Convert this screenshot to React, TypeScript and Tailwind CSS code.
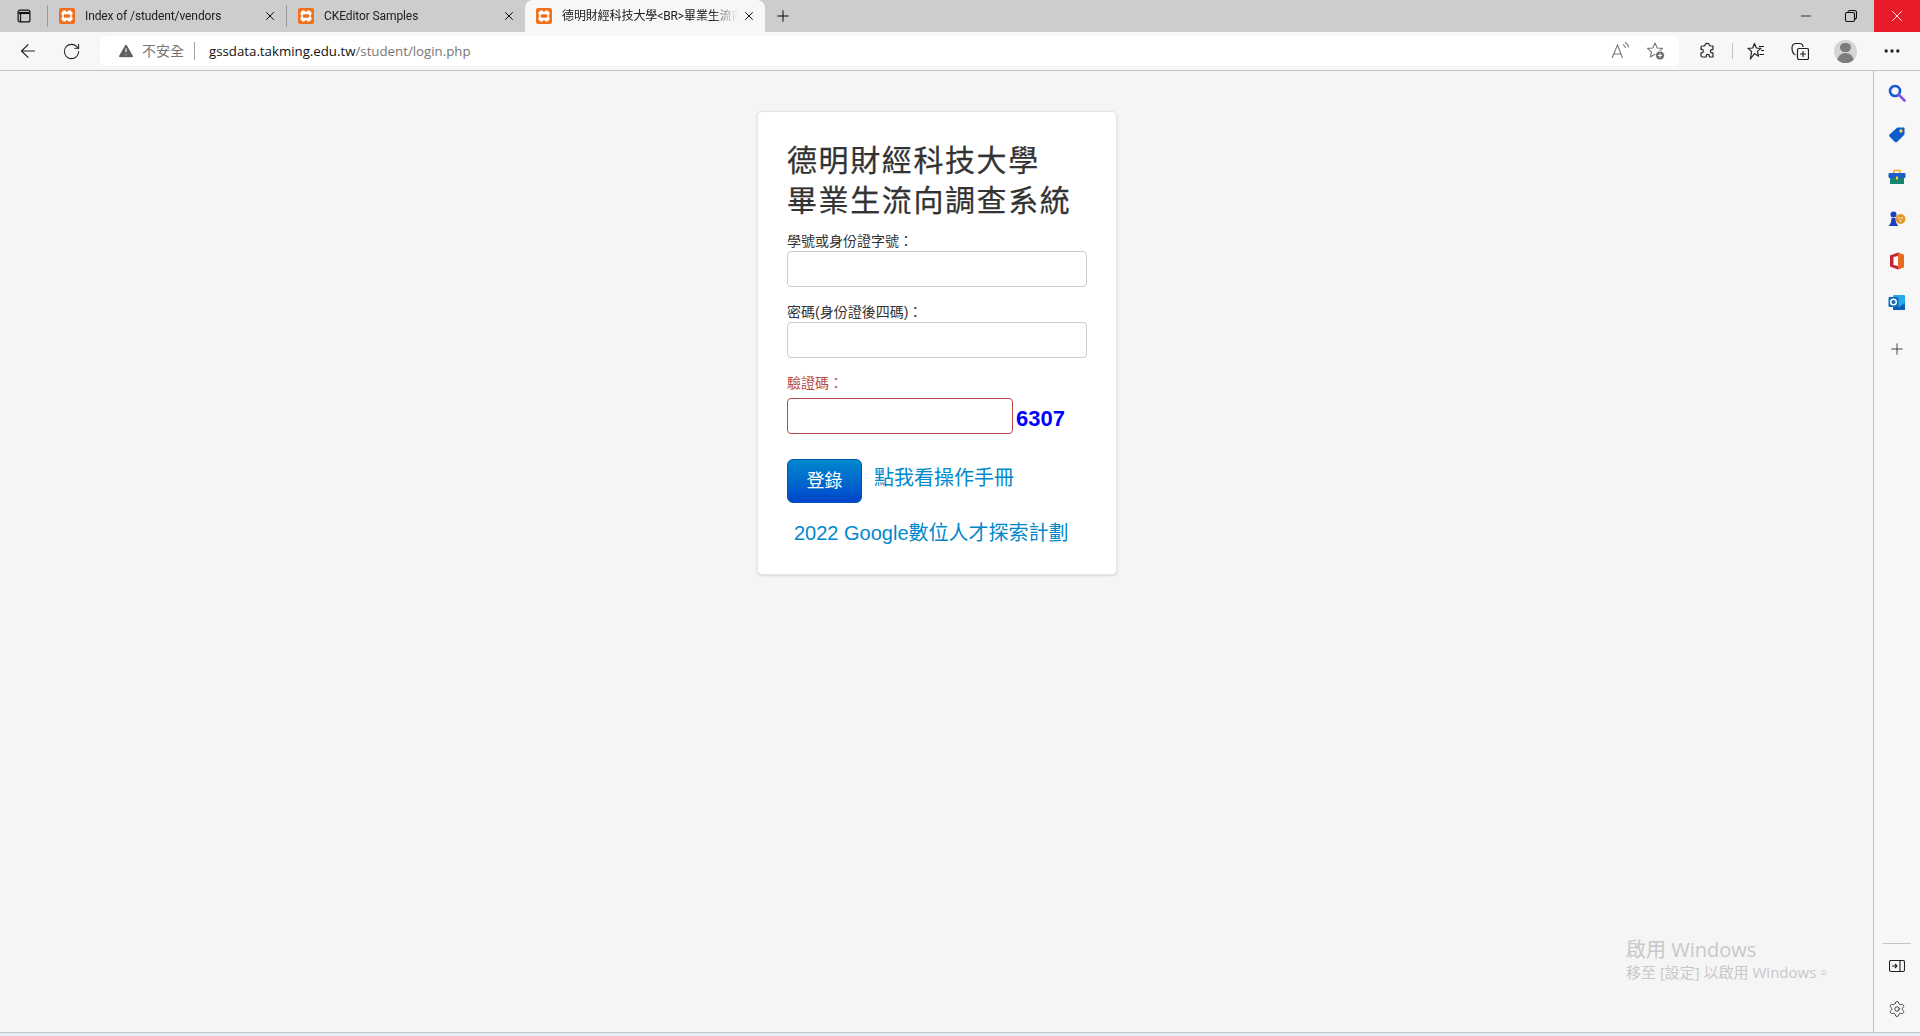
import { ArrowLeft, RotateCw, Minus, Plus, X, Ellipsis, Settings, TriangleAlert } from 'lucide-react';

function XamppIcon() {
    return (
        <svg className="w-4 h-4 shrink-0" viewBox="0 0 16 16">
            <rect width="16" height="16" rx="2" fill="#f0701e" />
            <path d="M4.500 2.500h2L8 4.300l1.500-1.800h2l2 2v2L12.300 8l1.200 1.500v2l-2 2h-2L8 11.700l-1.500 1.800h-2l-2-2v-2L3.700 8 2.500 6.500v-2z" fill="#fff" />
            <rect x="4.800" y="6.300" width="6.400" height="3.400" rx="1" fill="#f0701e" />
        </svg>
    );
}

function Tab({ title, active, className }: { title: string; active?: boolean; className?: string }) {
    return (
        <div className={`flex items-center ${className} ${active ? 'h-8 bg-[#f7f7f7] rounded-t-lg pl-[11px] pr-[9px]' : 'h-[22px] pl-[11px] pr-[9px]'}`}>
            <XamppIcon />
            <span className="ml-[10px] flex-1 min-w-0 overflow-hidden whitespace-nowrap text-[12px] tracking-[-0.1px] text-[#202020] [mask-image:linear-gradient(to_right,#000_85%,transparent)]">{title}</span>
            <X className="w-[14px] h-[14px] shrink-0 text-black ml-1" strokeWidth={1.6} />
        </div>
    );
}

function SideIcon({ children }: { children: React.ReactNode }) {
    return <div className="h-[42px] flex items-center justify-center">{children}</div>;
}

export default function App() {
    return (
        <div className="w-full h-[1036px] flex flex-col overflow-hidden relative bg-[#f5f5f5] font-['Roboto','Noto_Sans_CJK_TC',sans-serif]">
            {/* Tab strip */}
            <div className="h-8 shrink-0 bg-[#cdcdcd] flex items-center">
                <div className="w-[48px] h-[22px] flex items-center justify-center border-r border-[#9a9a9a]">
                    <svg className="w-4 h-4" viewBox="0 0 16 16" fill="none" stroke="#111" strokeWidth="1.2">
                        <rect x="2.100" y="2.100" width="11.800" height="11.800" rx="2" />
                        <path d="M2.500 5h11" strokeWidth="2.2" />
                        <path d="M4.500 5v9" />
                    </svg>
                </div>
                <Tab title="Index of /student/vendors" className="w-[239px] border-r border-[#9a9a9a]" />
                <Tab title="CKEditor Samples" className="w-[238px]" />
                <Tab title="德明財經科技大學<BR>畢業生流向調查系統" active className="w-[240px]" />
                <Plus className="w-[18px] h-[18px] ml-[9px] text-black" strokeWidth={1.3} />
                <div className="flex-1" />
                <Minus className="w-4 h-4 mr-[30px] text-black" strokeWidth={1.1} />
                <svg className="w-[14px] h-[14px] mr-[16px]" viewBox="0 0 14 14" fill="none" stroke="#111" strokeWidth="1.1">
                    <rect x="1.500" y="3.500" width="9" height="9" rx="1.5" />
                    <path d="M4 3.500c0-1.500.5-2 2-2h4.500c1.500 0 2 .5 2 2V8c0 1.500-.5 2-2 2" />
                </svg>
                <div className="w-[46px] h-8 bg-[#e81b2b] flex items-center justify-center">
                    <X className="w-[18px] h-[18px] text-white" strokeWidth={1.2} />
                </div>
            </div>

            {/* Toolbar */}
            <div className="h-[39px] shrink-0 bg-[#f7f7f7] border-b border-[#c4c4c4] flex items-center font-['Open_Sans','Noto_Sans_CJK_TC',sans-serif]">
                <div className="w-[100px] shrink-0 flex items-center">
                    <ArrowLeft className="w-[22px] h-[22px] ml-[17px] text-[#222]" strokeWidth={1.3} />
                    <RotateCw className="w-[19px] h-[19px] ml-[23px] text-[#222]" strokeWidth={1.3} />
                </div>
                <div className="w-[1579px] h-[30px] bg-white rounded-md flex items-center">
                    <TriangleAlert className="w-[18px] h-[18px] ml-[17px] text-white fill-[#5f5f5f]" strokeWidth={1.5} />
                    <span className="ml-[7px] text-[14px] leading-none text-[#767676]">不安全</span>
                    <span className="ml-[10px] w-px h-[18px] bg-[#a0a0a0]" />
                    <span className="ml-[14px] pt-px text-[13.25px] leading-none text-[#111]">gssdata.takming.edu.tw<span className="text-[#767676]">/student/login.php</span></span>
                    <div className="flex-1" />
                    {/* read aloud */}
                    <svg className="w-5 h-5" viewBox="0 0 20 20" fill="none" stroke="#777" strokeWidth="1.1">
                        <path d="M2 17L7.500 4l5 13M4 13h7" />
                        <path d="M13 3.500c1.500.8 2.300 2 2.500 3.500M15 1.500c2 1 3.300 2.700 3.500 5" />
                    </svg>
                    {/* add to favorites */}
                    <svg className="w-5 h-5 ml-4 mr-[13px]" viewBox="0 0 20 20" fill="none">
                        <path d="M9 2l2.200 5 5.300.4-4 3.500 1.200 5.100L9 13.300 4.300 16l1.200-5.100-4-3.500L6.800 7z" stroke="#777" strokeWidth="1.1" strokeLinejoin="round" />
                        <circle cx="14" cy="14.500" r="4.500" fill="#666" stroke="#fff" />
                        <path d="M14 12.300v4.400M11.800 14.500h4.400" stroke="#fff" strokeWidth="1.2" />
                    </svg>
                </div>
                <div className="flex-1 flex items-center">
                    {/* extensions */}
                    <svg className="w-[18px] h-[18px] ml-[19px]" viewBox="0 0 18 18" fill="none" stroke="#222" strokeWidth="1.2" strokeLinejoin="round">
                        <path d="M7 2.800C7.500 1 11 1 11.200 2.800c.1.800.5 1.200 1.300 1.200H15v3c0 .6-.6.800-1.200.7C12 7.400 12 11 13.800 10.800c.6-.1 1.200.1 1.200.7V15h-3c-.6 0-.8-.6-.7-1.200C11.600 12 8 12 8.200 13.800c.1.600-.1 1.200-.7 1.200H4.500c-1 0-1.500-.5-1.500-1.500v-2.700c1.800.3 2.300-1 2.300-1.800S4.800 7.200 3 7.500V5.500C3 4.500 3.500 4 4.500 4h1.300c.8 0 1.200-.5 1.200-1.200z" />
                    </svg>
                    <span className="ml-[16px] w-px h-4 bg-[#c4c4c4]" />
                    {/* favorites */}
                    <svg className="w-[18px] h-[18px] ml-[14px]" viewBox="0 0 18 18" fill="none" stroke="#222" strokeWidth="1.2" strokeLinejoin="round">
                        <path d="M7.500 1.500l1.800 4.500 4.700.4-3.600 3 1.200 4.800-4.100-2.600L3.400 17 4.600 9.400 1 6.400l4.700-.4z" />
                        <path d="M12 4.500h5M14 8.500h3M12.500 12.500h4.500" />
                    </svg>
                    {/* collections */}
                    <svg className="w-[18px] h-[18px] ml-[26px]" viewBox="0 0 18 18" fill="none" stroke="#222" strokeWidth="1.2" strokeLinejoin="round">
                        <rect x="6.500" y="6.500" width="11" height="11" rx="1.5" />
                        <path d="M12 9v6M9 12h6" />
                        <path d="M4.500 13C2.500 12 1 9 1 6c0-3 1.500-4.500 4-4.500h3.500c2 0 3.500 1.500 3.500 3.500" />
                    </svg>
                    {/* profile */}
                    <div className="w-[23px] h-[23px] ml-[25px] rounded-full bg-[#d4d4d4] overflow-hidden flex flex-col items-center">
                        <div className="w-[11px] h-[11px] mt-[3px] rounded-full bg-[#7d7d7d]" />
                        <div className="w-[17px] h-[12px] mt-[1px] rounded-t-full bg-[#7d7d7d]" />
                    </div>
                    <Ellipsis className="w-5 h-5 ml-[25px] text-[#222]" />
                </div>
            </div>

            {/* Page + sidebar */}
            <div className="flex-1 flex min-h-0">
                <main className="flex-1 min-w-0 font-['Liberation_Sans','Noto_Sans_CJK_TC',sans-serif]">
                    <div className="w-[360px] h-[464px] mt-[40px] ml-[757px] bg-white border border-[#e5e5e5] rounded-[5px] shadow-sm pt-[29px] px-[29px]">
                        <h2 className="text-[30px] leading-[40px] font-normal tracking-[1.6px] text-[#333] [-webkit-text-stroke:0.25px_#333] mb-[10px]">德明財經科技大學<br />畢業生流向調查系統</h2>
                        <label className="block text-[14px] leading-5 text-[#333]">學號或身份證字號：</label>
                        <input className="block w-[300px] h-[36px] mb-[15px] bg-white border border-[#ccc] rounded" />
                        <label className="block text-[14px] leading-5 text-[#333]">密碼(身份證後四碼)：</label>
                        <input className="block w-[300px] h-[36px] mb-[15px] bg-white border border-[#ccc] rounded" />
                        <label className="block text-[14px] leading-5 text-[#b94a48]">驗證碼：</label>
                        <div className="flex items-start mt-[5px]">
                            <input className="block w-[226px] h-[36px] bg-white border border-[#b94a48] rounded" />
                            <span className="ml-[3px] mt-[8px] text-[22px] leading-[25px] font-bold text-[#0000ff]">6307</span>
                        </div>
                        <div className="flex items-start mt-[25px]">
                            <button className="w-[75px] h-[44px] rounded-md text-[18px] text-white bg-gradient-to-b from-[#0088cc] to-[#0044cc] border border-[#0055bb]">登錄</button>
                            <a className="ml-3 mt-[5px] text-[20px] leading-7 text-[#0088cc]">點我看操作手冊</a>
                        </div>
                        <a className="block ml-[7px] mt-[16px] text-[20px] leading-7 text-[#0088cc]">2022 Google數位人才探索計劃</a>
                    </div>
                </main>
                <aside className="w-[47px] shrink-0 border-l border-[#c4c4c4] bg-[#f7f7f7] flex flex-col items-center pt-px pb-[2px]">
                    <SideIcon>
                        <svg className="w-[18px] h-[18px]" viewBox="0 0 18 18" fill="none">
                            <circle cx="7" cy="7" r="5" stroke="#1757d8" strokeWidth="2.6" />
                            <path d="M11 11l5.500 5.500" stroke="#8a4fe0" strokeWidth="2.6" strokeLinecap="round" />
                        </svg>
                    </SideIcon>
                    <SideIcon>
                        <svg className="w-[18px] h-[18px]" viewBox="0 0 18 18">
                            <path d="M10 1.500h5.500c.6 0 1 .4 1 1V8c0 .5-.2.8-.5 1.100L9 16c-.6.6-1.400.6-2 0L1.500 10.500c-.6-.6-.6-1.400 0-2L9 1.800c.3-.2.6-.3 1-.3z" fill="#0d5cc9" />
                            <circle cx="13" cy="5" r="1.7" fill="#ffd24d" />
                        </svg>
                    </SideIcon>
                    <SideIcon>
                        <svg className="w-[18px] h-[18px]" viewBox="0 0 18 18">
                            <path d="M6 5V2.500h6V5" fill="none" stroke="#f0b429" strokeWidth="1.6" />
                            <rect x="0.500" y="5" width="17" height="5" rx="1" fill="#1a5fc9" />
                            <rect x="2" y="10" width="14" height="6" fill="#15856e" />
                            <rect x="8" y="8.500" width="2" height="3" fill="#ffc83d" />
                        </svg>
                    </SideIcon>
                    <SideIcon>
                        <svg className="w-[18px] h-[18px]" viewBox="0 0 18 18">
                            <circle cx="5.500" cy="4.500" r="3" fill="#1b3fbf" />
                            <path d="M0.500 16c1-1 1.500-2 2.500-3.500L3.500 8h4l.5 4.500c1 1.500 1.500 2.500 2.500 3.500z" fill="#1b3fbf" />
                            <circle cx="12.500" cy="9" r="5" fill="#e39a2b" />
                            <circle cx="11" cy="8" r=".8" fill="#fff" />
                            <circle cx="14" cy="8" r=".8" fill="#fff" />
                            <circle cx="12.500" cy="11" r=".8" fill="#fff" />
                        </svg>
                    </SideIcon>
                    <SideIcon>
                        <svg className="w-[18px] h-[18px]" viewBox="0 0 18 18">
                            <path d="M10 .5l6 2.500v12l-6 2.500-8-3V3.500z" fill="#c7243a" />
                            <path d="M10 4v10L5.500 13V5z" fill="#fff" />
                            <path d="M10 .5l6 2.500v12l-6 2.500z" fill="#ea6a1f" />
                        </svg>
                    </SideIcon>
                    <SideIcon>
                        <svg className="w-[18px] h-[18px]" viewBox="0 0 18 18">
                            <rect x="5" y="1" width="12" height="15" rx="1" fill="#28a8ea" />
                            <path d="M5 10l6 3 6-4v7H5z" fill="#0a5fb4" />
                            <rect x="0.500" y="3" width="10" height="10" rx="1" fill="#0f6cbd" />
                            <circle cx="5.500" cy="8" r="2.800" fill="none" stroke="#fff" strokeWidth="1.5" />
                        </svg>
                    </SideIcon>
                    <div className="mt-[4px]"><SideIcon><Plus className="w-[18px] h-[18px] text-[#333]" strokeWidth={1.2} /></SideIcon></div>
                    <div className="flex-1" />
                    <div className="w-7 h-px bg-[#c4c4c4]" />
                    <div className="h-[44px] flex items-center">
                        <svg className="w-4 h-[14px]" viewBox="0 0 16 14" fill="none" stroke="#222" strokeWidth="1.1">
                            <rect x=".5" y="1.500" width="15" height="11" rx="1.5" />
                            <path d="M11 1.500v11M3 7h5M6 5l2 2-2 2" />
                        </svg>
                    </div>
                    <div className="h-[42px] flex items-center"><Settings className="w-[18px] h-[18px] text-[#222]" strokeWidth={1.1} /></div>
                </aside>
            </div>
            <div className="h-[4px] shrink-0 bg-[#e3eefa] border-t border-[#c4c4c4]" />

            {/* Activation watermark */}
            <div className="absolute left-[1626px] top-[938px] text-[#c8c8c8] font-['Open_Sans','Noto_Sans_CJK_TC',sans-serif]">
                <p className="text-[20px] leading-6">啟用 Windows</p>
                <p className="text-[15px] leading-5">移至 [設定] 以啟用 Windows。</p>
            </div>
        </div>
    );
}
